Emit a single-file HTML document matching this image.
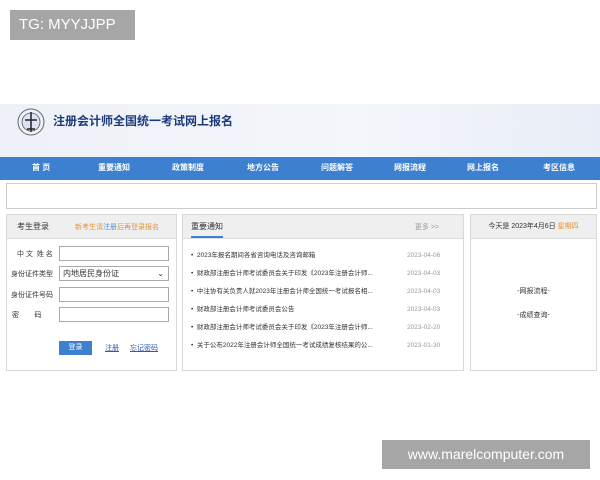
<!DOCTYPE html>
<html><head><meta charset="utf-8"><style>
*{margin:0;padding:0;box-sizing:border-box}
body{width:600px;height:480px;background:#fff;position:relative;overflow:hidden;font-family:"Liberation Sans","Noto Sans CJK SC",sans-serif;font-size:7px;color:#333;line-height:1}
.abs{position:absolute}
.hdr{left:0;top:104px;width:600px;height:53px;background:linear-gradient(90deg,#eef1f7 0%,#f3f6fb 60%,#e9eef6 100%)}
.nav{left:0;top:157px;width:600px;height:23px;background:#3d80cf;color:#fff;font-size:8px;font-weight:bold}
.nav span{position:absolute;top:7px}
.panel{border:1px solid #d8d8d8;background:#fff;top:214px;height:157px}
.ph{height:24px;background:#efefef;border-bottom:1px solid #ddd;position:relative}
.inp{position:absolute;left:52px;width:110px;height:15px;border:1px solid #aaa;background:#fff}
.lab{position:absolute;left:10px;font-size:7px}
.li{position:absolute;left:8px;font-size:6.5px;white-space:nowrap;line-height:8px}
.dt{position:absolute;left:224px;font-size:6.5px;color:#999;line-height:8px}
</style></head><body>
<div class="abs" style="left:10px;top:10px;width:125px;height:30px;background:#a6a6a6;color:#fff;font-size:15px;line-height:30px;padding-left:9px">TG: MYYJJPP</div>
<div class="abs hdr"></div>
<svg class="abs" style="left:16px;top:107px" width="30" height="30" viewBox="0 0 30 30"><circle cx="15" cy="15" r="13" fill="none" stroke="#667" stroke-width="1"/><circle cx="15" cy="15" r="9" fill="#dde3f0" stroke="#556" stroke-width=".8"/><path d="M15 5 L15 25 M9 13 L21 13 M11 22 L19 22" stroke="#223" stroke-width="1.5"/></svg>
<div class="abs" style="left:53px;top:115px;font-size:12px;font-weight:bold;color:#1d3a7c">注册会计师全国统一考试网上报名</div>
<div class="abs nav">
<span style="left:32px">首 页</span><span style="left:98px">重要通知</span><span style="left:172px">政策制度</span><span style="left:247px">地方公告</span><span style="left:321px">问题解答</span><span style="left:394px">网报流程</span><span style="left:467px">网上报名</span><span style="left:543px">考区信息</span>
</div>
<div class="abs" style="left:6px;top:183px;width:591px;height:26px;border:1px solid #ccc"></div>

<div class="abs panel" style="left:6px;width:171px">
<div class="ph"><span style="position:absolute;left:10px;top:8px;font-size:8px">考生登录</span><span style="position:absolute;left:68px;top:9px;font-size:7px;color:#e8953a">新考生请<span style="color:#4a90e2">注册</span>后再登录报名</span></div>
<div class="lab" style="top:36px">中 文 &nbsp;姓 名</div><div class="inp" style="top:31px"></div>
<div class="lab" style="top:56px;left:4px">身份证件类型</div><div class="inp" style="top:51px;font-size:8px;padding:3px 3px">内地居民身份证<span style="position:absolute;right:4px">⌄</span></div>
<div class="lab" style="top:77px;left:4px">身份证件号码</div><div class="inp" style="top:72px"></div>
<div class="lab" style="top:97px;left:5px">密 &nbsp; &nbsp; &nbsp; &nbsp;码</div><div class="inp" style="top:92px"></div>
<div style="position:absolute;left:52px;top:126px;width:33px;height:14px;background:#3d80cf;color:#fff;text-align:center;line-height:14px">登录</div>
<div style="position:absolute;left:98px;top:130px;color:#2a5db0;text-decoration:underline">注册</div>
<div style="position:absolute;left:123px;top:130px;color:#2a5db0;text-decoration:underline">忘记密码</div>
</div>

<div class="abs panel" style="left:182px;width:282px">
<div class="ph"><span style="position:absolute;left:8px;top:8px;font-size:8px;border-bottom:2px solid #3d80cf;padding-bottom:5px">重要通知</span><span style="position:absolute;right:24px;top:9px;color:#999">更多 &gt;&gt;</span></div>
<div class="li" style="top:37px">•&nbsp; 2023年报名期间各省咨询电话及咨询邮箱</div><div class="dt" style="top:37px">2023-04-06</div>
<div class="li" style="top:55px">•&nbsp; 财政部注册会计师考试委员会关于印发《2023年注册会计师...</div><div class="dt" style="top:55px">2023-04-03</div>
<div class="li" style="top:73px">•&nbsp; 中注协有关负责人就2023年注册会计师全国统一考试报名相...</div><div class="dt" style="top:73px">2023-04-03</div>
<div class="li" style="top:91px">•&nbsp; 财政部注册会计师考试委员会公告</div><div class="dt" style="top:91px">2023-04-03</div>
<div class="li" style="top:109px">•&nbsp; 财政部注册会计师考试委员会关于印发《2023年注册会计师...</div><div class="dt" style="top:109px">2023-02-20</div>
<div class="li" style="top:127px">•&nbsp; 关于公布2022年注册会计师全国统一考试成绩复核结果的公...</div><div class="dt" style="top:127px">2023-01-30</div>
</div>

<div class="abs panel" style="left:470px;width:127px">
<div class="ph" style="text-align:center;line-height:24px">今天是 2023年4月6日 <span style="color:#e8953a">星期四</span></div>
<div style="position:absolute;width:100%;top:73px;text-align:center">-网报流程-</div>
<div style="position:absolute;width:100%;top:97px;text-align:center">-成绩查询-</div>
</div>

<div class="abs" style="left:382px;top:440px;width:208px;height:29px;background:#a6a6a6;color:#fff;font-size:14px;line-height:29px;text-align:center">www.marelcomputer.com</div>
</body></html>
